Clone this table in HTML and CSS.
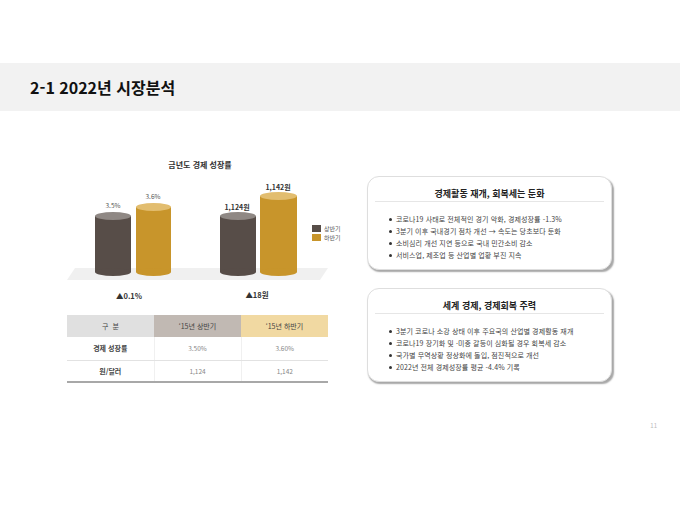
FILE: index.html
```html
<!DOCTYPE html>
<html lang="ko">
<head>
<meta charset="utf-8">
<title>2-1 2022년 시장분석</title>
<link rel="stylesheet" href="styles.css">
</head>
<body>
<header class="title-band">
  <h1 class="title">2-1 2022년 시장분석</h1>
</header>
<main class="main">
  <section class="left">
    <svg class="chart" width="290" height="155" viewBox="60 150 290 155" xmlns="http://www.w3.org/2000/svg">
      <text class="c-title" x="200" y="168" text-anchor="middle">금년도 경제 성장률</text>
      <polygon points="75,268 328,268 320,280 67,280" fill="#f0f0f0"/>
      <!-- bar 1 -->
      <rect x="95" y="216" width="36" height="56" fill="#574d48"/>
      <ellipse cx="113" cy="272" rx="18" ry="4" fill="#574d48"/>
      <ellipse cx="113" cy="216" rx="18" ry="4" fill="#8f8884"/>
      <!-- bar 2 -->
      <rect x="136" y="207" width="35" height="65" fill="#c8952b"/>
      <ellipse cx="153.5" cy="272" rx="17.5" ry="4" fill="#c8952b"/>
      <ellipse cx="153.5" cy="207" rx="17.5" ry="4" fill="#e2bd6f"/>
      <!-- bar 3 -->
      <rect x="220" y="216" width="36" height="56" fill="#574d48"/>
      <ellipse cx="238" cy="272" rx="18" ry="4" fill="#574d48"/>
      <ellipse cx="238" cy="216" rx="18" ry="4" fill="#8f8884"/>
      <!-- bar 4 -->
      <rect x="260" y="196" width="37" height="76" fill="#c8952b"/>
      <ellipse cx="278.5" cy="272" rx="18.5" ry="4" fill="#c8952b"/>
      <ellipse cx="278.5" cy="196" rx="18.5" ry="4" fill="#e2bd6f"/>
      <text class="c-val" x="113" y="208" text-anchor="middle">3.5%</text>
      <text class="c-val" x="153" y="199" text-anchor="middle">3.6%</text>
      <text class="c-val-b" x="237" y="210" text-anchor="middle">1,124원</text>
      <text class="c-val-b" x="278" y="190" text-anchor="middle">1,142원</text>
      <rect x="312" y="225" width="9" height="7" fill="#574d48"/>
      <text class="c-leg" x="324" y="231">상반기</text>
      <rect x="312" y="234" width="9" height="7" fill="#c8952b"/>
      <text class="c-leg" x="324" y="240">하반기</text>
      <text class="c-diff" x="129" y="299" text-anchor="middle">▲0.1%</text>
      <text class="c-diff" x="257" y="298" text-anchor="middle">▲18원</text>
    </svg>
    <table class="data">
      <thead>
        <tr>
          <th class="h1">구&nbsp;&nbsp;분</th>
          <th class="h2">‘15년 상반기</th>
          <th class="h3">‘15년 하반기</th>
        </tr>
      </thead>
      <tbody>
        <tr class="r1">
          <td class="lab">경제 성장률</td>
          <td>3.50%</td>
          <td>3.60%</td>
        </tr>
        <tr class="r2">
          <td class="lab">원/달러</td>
          <td>1,124</td>
          <td>1,142</td>
        </tr>
      </tbody>
    </table>
  </section>
  <section class="right">
    <div class="card">
      <h2 class="card-title">경제활동 재개, 회복세는 둔화</h2>
      <ul class="bullets">
        <li>코로나19 사태로 전체적인 경기 악화, 경제성장률 -1.3%</li>
        <li>3분기 이후 국내경기 점차 개선 → 속도는 당초보다 둔화</li>
        <li>소비심리 개선 지연 등으로 국내 민간소비 감소</li>
        <li>서비스업, 제조업 등 산업별 업황 부진 지속</li>
      </ul>
    </div>
    <div class="card">
      <h2 class="card-title">세계 경제, 경제회복 주력</h2>
      <ul class="bullets">
        <li>3분기 코로나 소강 상태 이후 주요국의 산업별 경제활동 재개</li>
        <li>코로나19 장기화 및 ·미중 갈등이 심화될 경우 회복세 감소</li>
        <li>국가별 무역상황 정상화에 돌입, 점진적으로 개선</li>
        <li>2022년 전체 경제성장률 평균 -4.4% 기록</li>
      </ul>
    </div>
  </section>
</main>
<footer class="footer">
  <span class="page-no">11</span>
</footer>
</body>
</html>
```

FILE: styles.css
```css
* { box-sizing: border-box; }
html, body {
  margin: 0;
  padding: 0;
  background: #ffffff;
}
body {
  width: 680px;
  height: 510px;
  overflow: hidden;
  font-family: "Noto Sans CJK KR", "Noto Sans", sans-serif;
  color: #333;
}
.title-band {
  margin-top: 63px;
  height: 48px;
  background: #f2f2f2;
  display: flex;
  align-items: center;
  padding-left: 30px;
}
.title {
  margin: 0;
  font-size: 16px;
  font-weight: 700;
  color: #111;
  letter-spacing: 0;
  line-height: 1;
}
.main {
  display: flex;
  padding-left: 60px;
  gap: 17px;
  height: 300px;
}
.left {
  width: 290px;
  display: flex;
  flex-direction: column;
}
.chart {
  display: block;
  margin-top: 39px;
}
.c-title { font-size: 8px; font-weight: 700; fill: #333; }
.c-val { font-size: 6.5px; fill: #555; }
.c-val-b { font-size: 7px; font-weight: 700; fill: #333; }
.c-leg { font-size: 6px; fill: #555; }
.c-diff { font-size: 7.5px; font-weight: 700; fill: #333; }

.data {
  margin-top: 10px;
  margin-left: 7px;
  width: 261px;
  border-collapse: collapse;
  table-layout: fixed;
  font-size: 7px;
}
.data th {
  height: 22px;
  font-weight: 400;
  color: #444;
  padding: 0;
}
.data .h1 { background: #e0e0e0; }
.data .h2 { background: #c1b9b3; }
.data .h3 { background: #f1d9a2; }
.data td {
  text-align: center;
  padding: 0;
  color: #888;
  font-size: 6.5px;
  border-left: 1px solid #f0f0f0;
}
.data td.lab {
  color: #444;
  font-size: 7px;
  font-weight: 700;
  border-left: none;
}
.data .r1 td { height: 23px; border-bottom: 1px solid #e2e2e2; }
.data .r2 td { height: 22px; border-bottom: 2px solid #a8a8a8; }

.right {
  width: 245px;
  padding-top: 65px;
  display: flex;
  flex-direction: column;
  gap: 18px;
}
.card {
  height: 94px;
  border: 1px solid #dedede;
  border-radius: 12px;
  box-shadow: 1.5px 2px 1.5px rgba(0, 0, 0, 0.35);
  background: #fff;
  padding: 0 7px;
}
.card-title {
  margin: 0;
  height: 25px;
  padding-top: 11px;
  font-size: 9px;
  font-weight: 700;
  color: #222;
  text-align: center;
  line-height: 11px;
  border-bottom: 1px solid #e6e6e6;
}
.bullets {
  list-style: none;
  margin: 0;
  padding: 11px 0 0 14px;
}
.bullets li {
  position: relative;
  font-size: 7px;
  letter-spacing: 0.1px;
  line-height: 12px;
  color: #444;
  padding-left: 7px;
  white-space: nowrap;
}
.bullets li::before {
  content: "";
  position: absolute;
  left: 0;
  top: 4.5px;
  width: 3px;
  height: 3px;
  border-radius: 50%;
  background: #333;
}
.footer {
  display: flex;
  justify-content: flex-end;
  padding-right: 23px;
  margin-top: 10px;
}
.page-no {
  font-size: 6px;
  color: #bbb;
}
```
